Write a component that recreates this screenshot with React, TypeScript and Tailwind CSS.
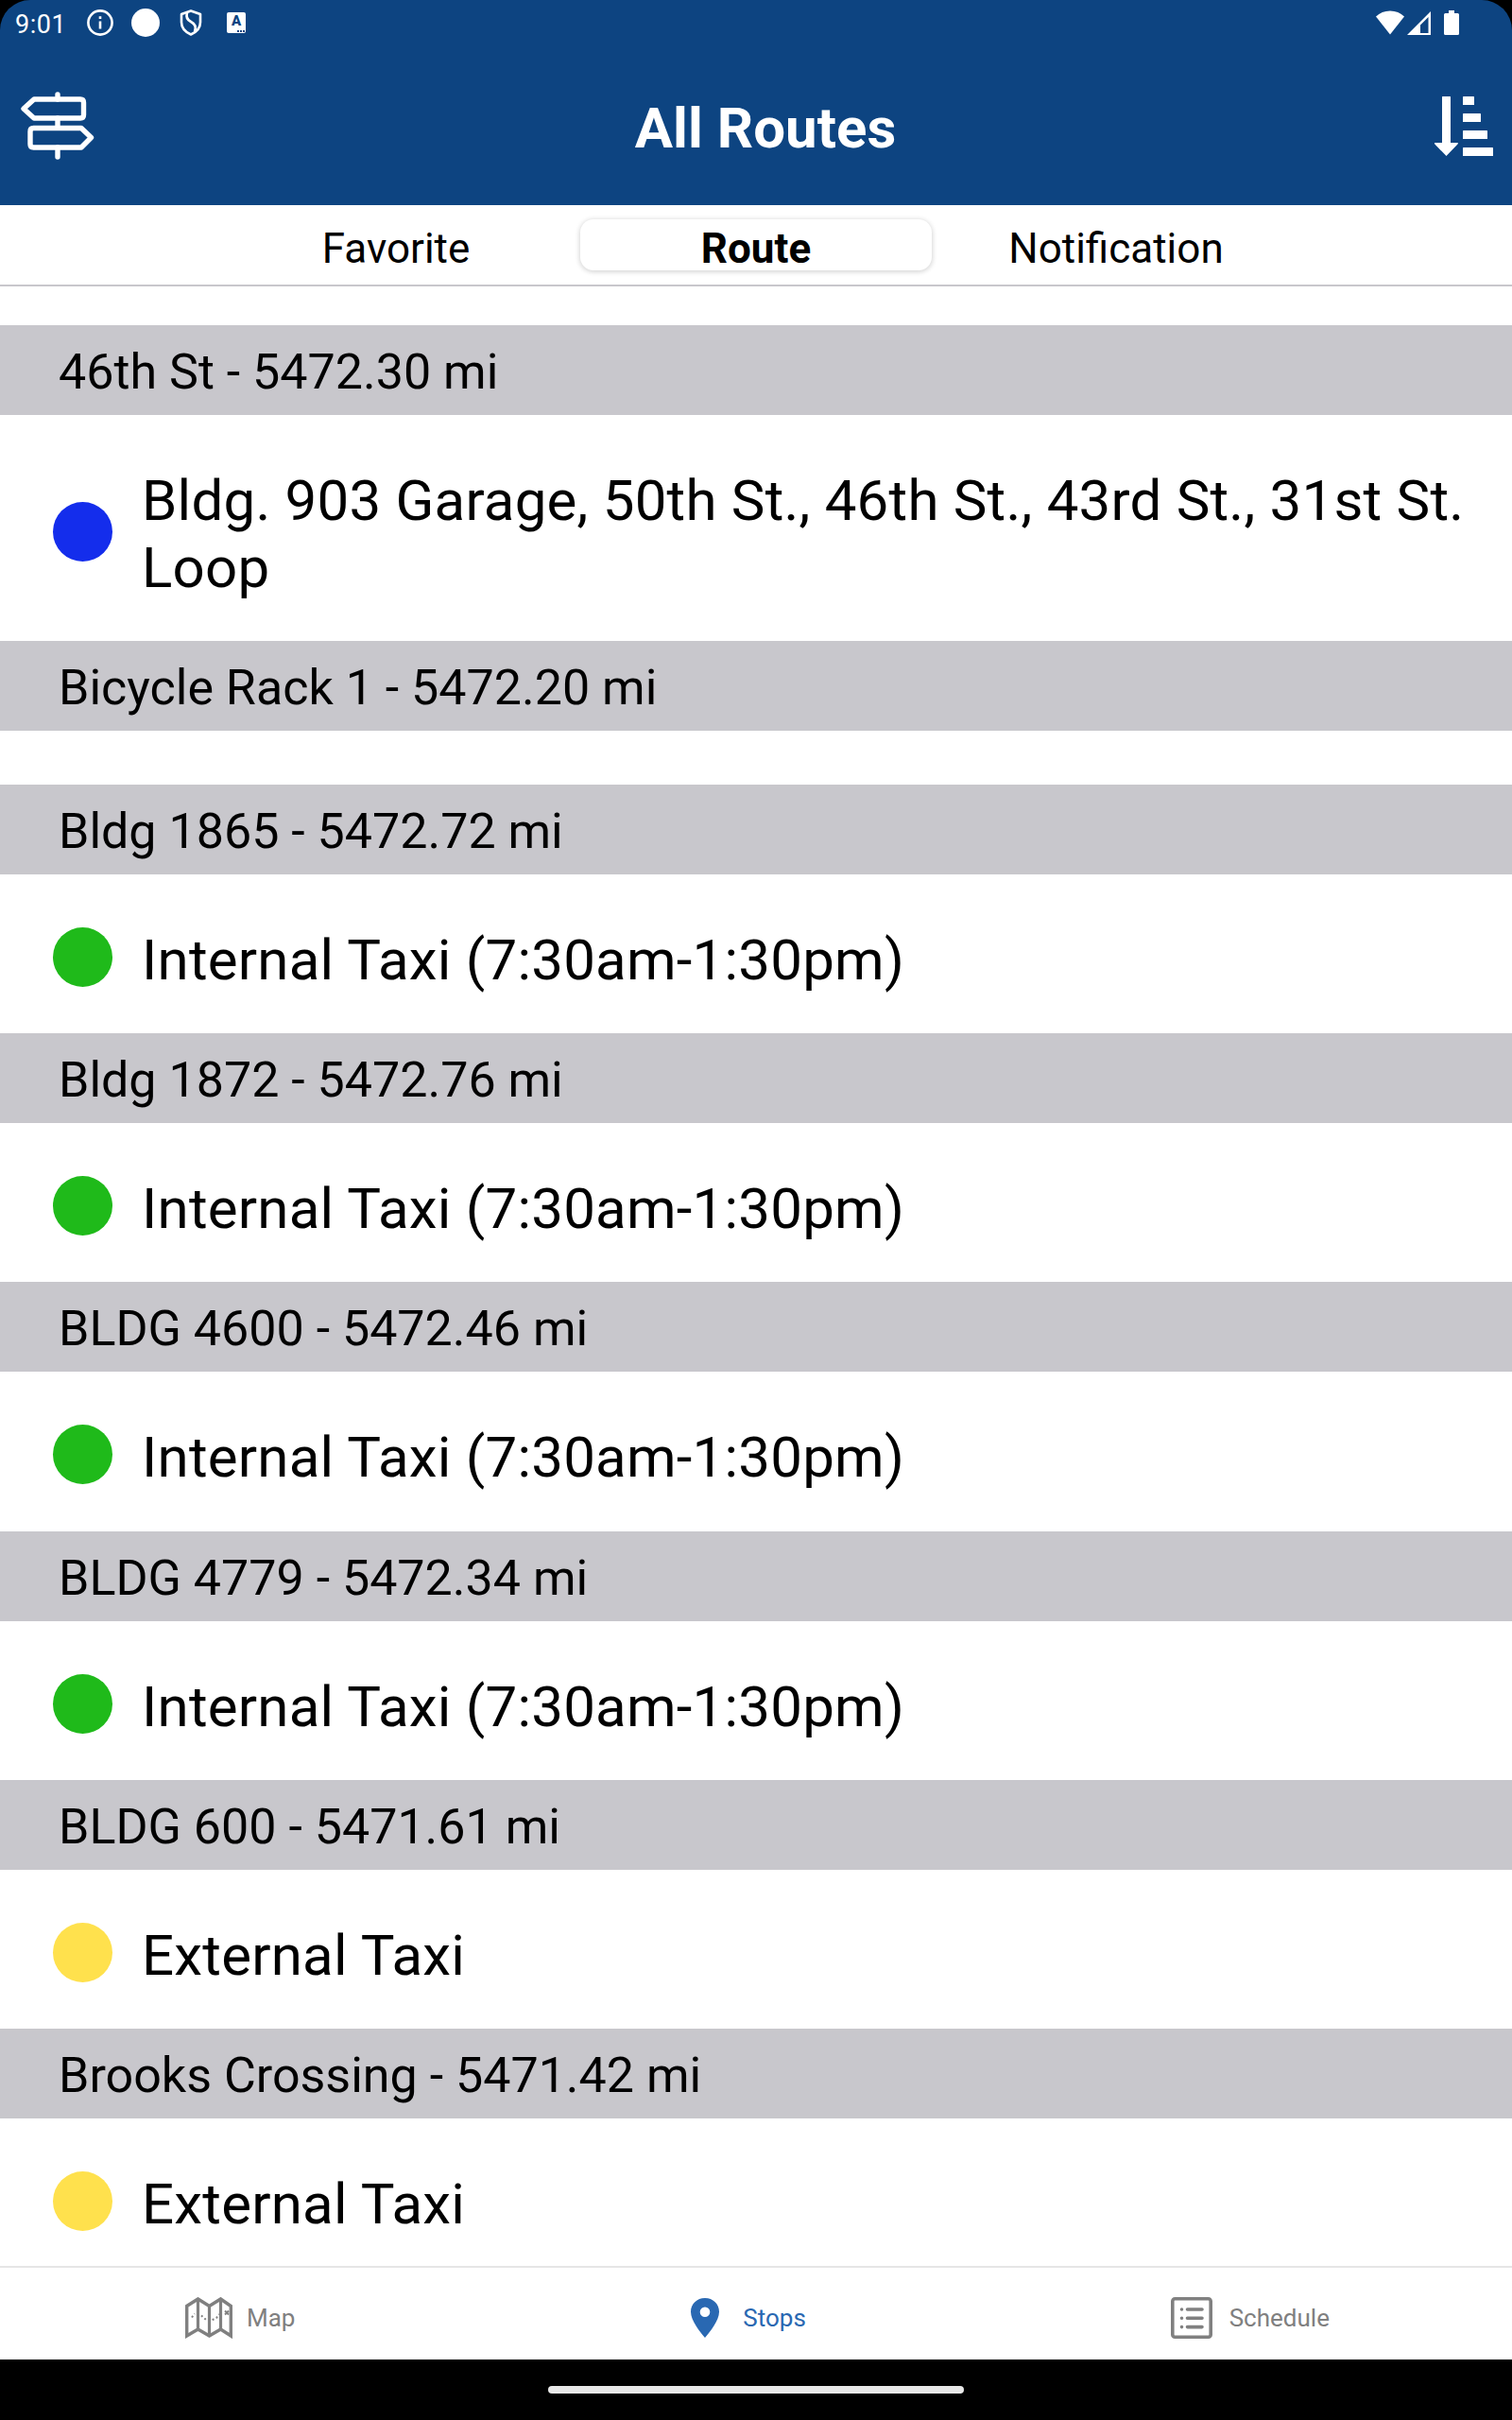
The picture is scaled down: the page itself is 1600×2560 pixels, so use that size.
interface Route {
  name: string;
  color: string;
}

interface Stop {
  name: string;
  distance: string;
  routes: Route[];
}

const loop = {
  name: 'Bldg. 903 Garage, 50th St., 46th St., 43rd St., 31st St. Loop',
  color: 'bg-[#142dec]',
};
const internalTaxi = { name: 'Internal Taxi (7:30am-1:30pm)', color: 'bg-[#1fba1a]' };
const externalTaxi = { name: 'External Taxi', color: 'bg-[#ffe14d]' };

const stops: Stop[] = [
  { name: '46th St', distance: '5472.30', routes: [loop] },
  { name: 'Bicycle Rack 1', distance: '5472.20', routes: [] },
  { name: 'Bldg 1865', distance: '5472.72', routes: [internalTaxi] },
  { name: 'Bldg 1872', distance: '5472.76', routes: [internalTaxi] },
  { name: 'BLDG 4600', distance: '5472.46', routes: [internalTaxi] },
  { name: 'BLDG 4779', distance: '5472.34', routes: [internalTaxi] },
  { name: 'BLDG 600', distance: '5471.61', routes: [externalTaxi] },
  { name: 'Brooks Crossing', distance: '5471.42', routes: [externalTaxi] },
];

function StatusBar() {
  return (
    <div className="flex h-12 items-center justify-between pl-4 pr-14">
      <div className="flex items-center">
        <span className="w-[76px] pt-[3px] text-[27px] leading-8 tracking-[0.5px]">9:01</span>
        <svg width="28" height="28" viewBox="0 0 28 28" fill="none" stroke="currentColor" strokeWidth="2.6">
          <circle cx="14" cy="14" r="12.6" />
          <path d="M14 12.5v8M14 7.2v2.8" />
        </svg>
        <div className="ml-[19px] h-[30px] w-[30px] rounded-full bg-white" />
        <svg className="ml-[21px]" width="24" height="28" viewBox="0 0 24 28" fill="none" stroke="currentColor" strokeWidth="2.6">
          <path d="M12 1.5 22 5v8.5c0 6-4.3 10.5-10 13-5.7-2.5-10-7-10-13V5Z" strokeLinejoin="round" />
          <path d="M8 3.5c-1.5 5 0 7.5 4 9.5 4.5 2.3 6 5.5 4 10.5" />
        </svg>
        <div className="ml-[26px] flex h-[22px] w-5 flex-col items-center rounded-[2px] bg-white text-[#0d4481]">
          <span className="text-[15px] font-black leading-[19px]">A</span>
          <div className="flex gap-px self-end pr-px">
            <i className="h-0.5 w-0.5 bg-[#0d4481]" />
            <i className="h-0.5 w-0.5 bg-[#0d4481]" />
            <i className="h-0.5 w-0.5 bg-[#0d4481]" />
          </div>
        </div>
      </div>
      <div className="flex items-center">
        <svg width="30" height="26" viewBox="0 0 30 26" fill="currentColor">
          <path d="M15 25.5 0 6.5C4 2.5 9 .5 15 .5s11 2 15 6Z" />
        </svg>
        <svg className="ml-[3px]" width="25" height="26" viewBox="0 0 25 26" fill="currentColor">
          <path fillRule="evenodd" d="M25 1v25H0ZM22.5 7 14 15.5V24h8.5Z" />
        </svg>
        <svg className="ml-3.5" width="16" height="26" viewBox="0 0 16 26" fill="currentColor">
          <path d="M5 0h6v3h3.500Q16 3 16 4.500v20q0 1.500-1.500 1.500h-13Q0 26 0 24.500v-20Q0 3 1.500 3H5Z" />
        </svg>
      </div>
    </div>
  );
}

function SignpostIcon() {
  return (
    <svg width="78" height="72" viewBox="0 0 78 72" fill="none" stroke="currentColor" strokeWidth="5.4" strokeLinecap="round" strokeLinejoin="round">
      <path d="M14 8h49q3.500 0 3.500 3.500v13q0 3.500-3.500 3.500H14L3 18Z" />
      <path d="M13.500 38.500H64L74.500 48.500 64 59H13.500q-3.500 0-3.500-3.500V42q0-3.500 3.500-3.500Z" />
      <path d="M39 3v5M39 28v10M39 59v10" />
    </svg>
  );
}

function SortIcon() {
  return (
    <svg width="62" height="63" viewBox="0 0 62 63" fill="currentColor">
      <path d="M8.500 0h8q.5 0 .5.500V49h7.500q.8.400 0 1.500L12.500 63 .3 50.500q-.8-1.100 0-1.500H8V.5Q8 0 8.500 0Z" />
      <rect x="30" y="0" width="12" height="9" rx="0.6" />
      <rect x="30" y="18" width="19" height="9" rx="0.6" />
      <rect x="30" y="36" width="26" height="9" rx="0.6" />
      <rect x="30" y="54" width="32" height="9" rx="0.6" />
    </svg>
  );
}

function MapIcon() {
  return (
    <svg width="50" height="44" viewBox="0 0 50 44" fill="none" stroke="currentColor" strokeWidth="3.2">
      <path d="M1.600 9.500 13.500 2 25.500 9.500 37.500 2 48.400 9.500V41L37.500 34 25.500 41 13.500 34 1.600 41Z" strokeWidth="3.6" />
      <path d="M13.500 3v31M25.500 9v32M37.500 3v31" />
      <path d="M7 21.500 10 17.500M17 19.500 22 24 28 24.500 33 22 36 18" strokeWidth="2" strokeDasharray="2 2.500" />
      <path d="M42 14.500l4 4M46 14.500l-4 4" strokeWidth="2" />
    </svg>
  );
}

function PinIcon() {
  return (
    <svg width="30" height="42" viewBox="0 0 30 42" fill="currentColor">
      <path fillRule="evenodd" d="M15 0C6.500 0 0 6.300 0 14.500 0 24 10 36 15 42c5-6 15-18 15-27.500C30 6.300 23.500 0 15 0Zm0 9.500a5.300 5.300 0 1 1 0 10.600 5.300 5.300 0 0 1 0-10.600Z" />
    </svg>
  );
}

function ScheduleIcon() {
  return (
    <svg width="44" height="44" viewBox="0 0 44 44" fill="none" stroke="currentColor" strokeWidth="3.6" strokeLinecap="round">
      <rect x="1.8" y="1.8" width="40.4" height="40.4" rx="2.5" />
      <path d="M17.500 13H33M17.500 22.300H33M17.500 31.600H33" />
      <path d="M11.500 13h.01M11.500 22.300h.01M11.500 31.600h.01" />
    </svg>
  );
}

function StopSection({ stop }: { stop: Stop }) {
  return (
    <section>
      <h2 className="flex h-[95px] items-center bg-[#c8c7cc] pl-[62px] pt-[5px] text-[52px]">
        {stop.name} - {stop.distance} mi
      </h2>
      {stop.routes.length === 0 && <div className="h-[57px]" />}
      {stop.routes.map((route) => (
        <div key={route.name} className="flex items-center pb-[42.15px] pl-14 pt-[55px]">
          <div className={`${route.color} mb-1.5 h-[63px] w-[63px] shrink-0 rounded-full`} />
          <p className="ml-[31px] text-[60px] leading-[71px] tracking-[0.22px]">{route.name}</p>
        </div>
      ))}
    </section>
  );
}

export default function App() {
  return (
    <div className="flex h-[2560px] w-[1600px] flex-col overflow-hidden bg-black font-['Roboto',sans-serif] text-black">
      {/* Header */}
      <header className="h-[217px] shrink-0 rounded-t-[32px] bg-[#0d4481] text-white">
        <StatusBar />
        <div className="flex h-[170px] items-center justify-between pl-[22px] pr-5">
          <SignpostIcon />
          <h1 className="pl-0.5 pt-[5px] text-[60px] font-bold">All Routes</h1>
          <SortIcon />
        </div>
      </header>

      {/* Tabs */}
      <div className="flex h-[86px] shrink-0 items-start justify-center border-b-2 border-[#c8c7cc] bg-white pt-[15px] text-[44px] leading-[63px]">
        <button className="h-[54px] w-[390px]">Favorite</button>
        <button className="h-[54px] w-[372px] rounded-[14px] bg-white font-bold shadow-[0_1px_5px_1px_rgba(0,0,0,0.16)]">
          Route
        </button>
        <button className="h-[54px] w-[390px]">Notification</button>
      </div>

      <main className="flex-1 overflow-hidden bg-white pt-[41px]">
        {stops.map((stop) => (
          <StopSection key={stop.name} stop={stop} />
        ))}
      </main>

      {/* Bottom navigation */}
      <nav className="grid h-[99px] shrink-0 grid-cols-3 border-t-2 border-[#e5e5e5] bg-white text-[26px] text-[#808080]">
        <button className="flex items-center pl-[196px] pt-2">
          <MapIcon />
          <span className="ml-[15px] pt-0.5">Map</span>
        </button>
        <button className="flex items-center pl-[198px] pt-2 text-[#2968b2]">
          <PinIcon />
          <span className="ml-[25px] pt-0.5">Stops</span>
        </button>
        <button className="flex items-center pl-[172px] pt-2">
          <ScheduleIcon />
          <span className="ml-[18px] pt-0.5">Schedule</span>
        </button>
      </nav>

      {/* Gesture bar */}
      <div className="flex h-16 shrink-0 items-center justify-center">
        <div className="h-2 w-[440px] rounded-full bg-[#e8e8e8]" />
      </div>
    </div>
  );
}
